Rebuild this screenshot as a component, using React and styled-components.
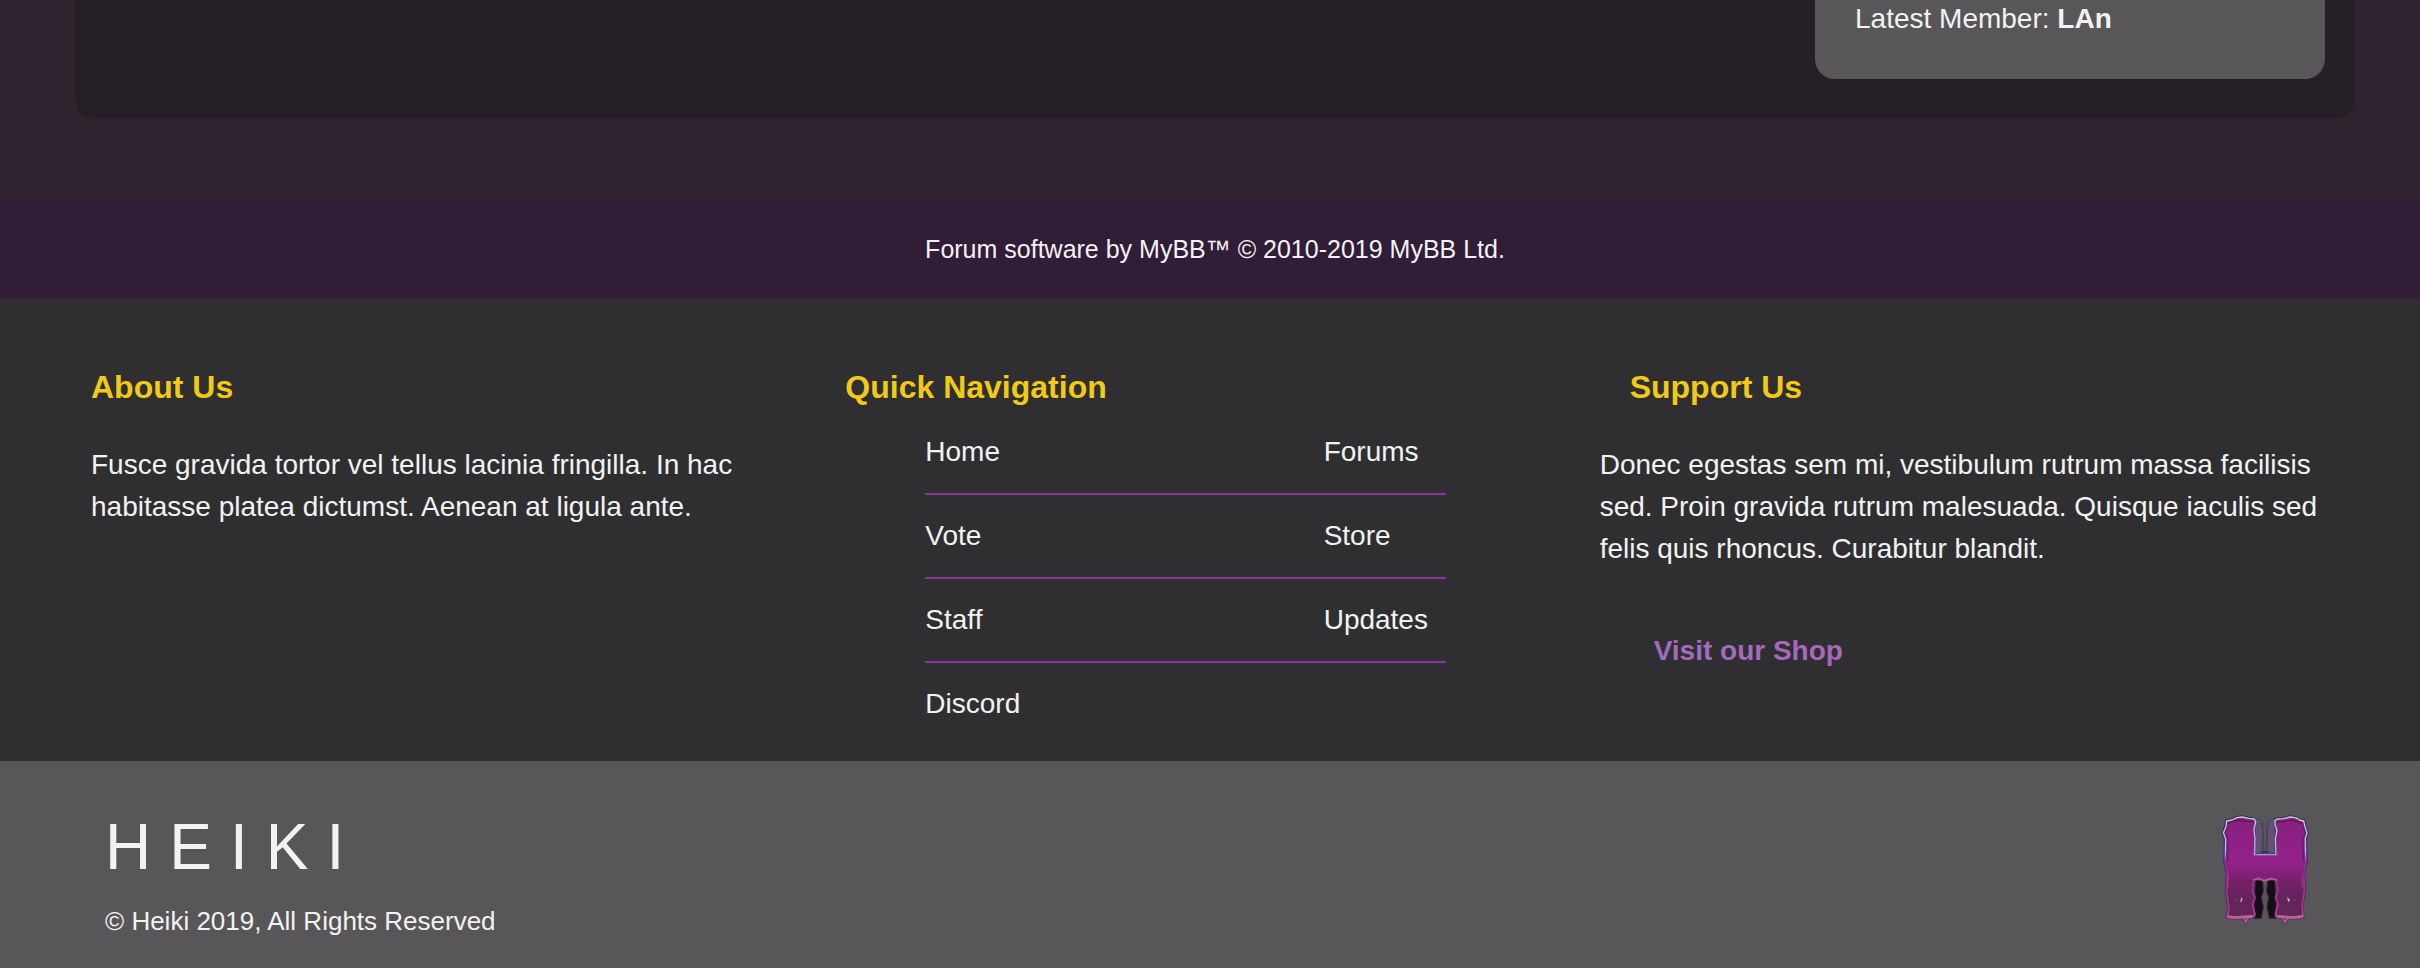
import React from 'react';
import styled, { createGlobalStyle } from 'styled-components';

const GlobalStyle = createGlobalStyle`
  *, *::before, *::after { box-sizing: border-box; }
  body {
    margin: 0;
    background: #2e232f;
    color: #f2f2f2;
    font-family: "Liberation Sans", Arial, sans-serif;
    font-size: 28px;
    line-height: 42px;
  }
`;

const Content = styled.main`
  padding: 0 65px 80px 75px;
`;

const Panel = styled.section`
  display: flex;
  justify-content: flex-end;
  padding: 0 30px 40px;
  background: #262026;
  border-radius: 0 0 20px 20px;
`;

const StatsCard = styled.aside`
  width: 510px;
  padding: 0 40px 41px;
  background: #595659;
  border-radius: 0 0 20px 20px;
`;

const Stat = styled.p`
  margin: 0;
  line-height: 38px;
`;

const SoftwareBar = styled.div`
  padding: 30px 30px 30px 40px;
  background: #321d38;
  font-size: 25px;
  line-height: 40px;
  text-align: center;
`;

const FooterColumns = styled.div`
  display: grid;
  grid-template-columns: repeat(3, minmax(0, 1fr));
  gap: 24px;
  padding: 64px 90px 35px 91px;
  background: #2f2f31;
`;

const Column = styled.section``;

const Heading = styled.h2`
  margin: 0;
  padding-left: ${({ $indent }) => ($indent ? '30px' : '0')};
  color: #f1c917;
  font-size: 32px;
  line-height: 48px;
`;

const Text = styled.p`
  margin: 33px 0 0;
`;

const NavList = styled.ul`
  display: grid;
  grid-template-columns: 1fr 122px;
  row-gap: 20px;
  margin: 20px 130px 0 80px;
  padding: 0;
  list-style: none;
`;

const NavItem = styled.li`
  padding-bottom: 20px;
  border-bottom: 2px solid #8636a3;

  &:last-child {
    padding-bottom: 1px;
    border-bottom: 0;
  }
`;

const NavLink = styled.a`
  color: inherit;
  text-decoration: none;
`;

const ShopLink = styled.a`
  display: inline-block;
  margin: 60px 0 0 54px;
  color: #a569bd;
  font-weight: bold;
  text-decoration: none;
`;

const BottomBar = styled.div`
  display: flex;
  justify-content: space-between;
  align-items: center;
  padding: 38px 110px 27px 105px;
  background: #595659;
`;

const Brand = styled.p`
  margin: 0 0 7px;
  font-size: 64px;
  line-height: 96px;
  letter-spacing: 18px;
`;

const Copyright = styled.p`
  margin: 0;
  font-size: 26px;
  line-height: 39px;
`;

const LogoSvg = styled.svg`
  display: block;
  width: 90px;
  height: 112px;
`;

function Logo() {
  return (
    <LogoSvg viewBox="60 45 270 336" role="img" aria-label="Heiki">
      <defs>
        <linearGradient id="body" x1="0" y1="0" x2="0" y2="1">
          <stop offset="0" stopColor="#86217c" />
          <stop offset="0.42" stopColor="#94208b" />
          <stop offset="0.62" stopColor="#742268" />
          <stop offset="0.8" stopColor="#63235a" />
          <stop offset="1" stopColor="#642b5b" />
        </linearGradient>
        <linearGradient id="edge" x1="0" y1="0" x2="0" y2="1">
          <stop offset="0" stopColor="#bfcddb" />
          <stop offset="0.33" stopColor="#b0b7d6" />
          <stop offset="0.42" stopColor="#8d3294" />
          <stop offset="0.85" stopColor="#b63a80" />
          <stop offset="1" stopColor="#c45c9c" />
        </linearGradient>
        <linearGradient id="rim" x1="0" y1="0" x2="0" y2="1">
          <stop offset="0" stopColor="#29334f" />
          <stop offset="0.4" stopColor="#23408f" />
          <stop offset="0.5" stopColor="#4c2f7c" />
          <stop offset="1" stopColor="#622e70" />
        </linearGradient>
      </defs>
      <path d="M166 58 L182 64 L188 96 L186 162 L166 164Z M224 58 L209 64 L202 96 L204 162 L224 164Z" fill="#694f70" stroke="#2b4d75" strokeWidth="3" />
      <path d="M188 72 L192 156 M202 72 L198 156" stroke="#413c48" strokeWidth="2" fill="none" />
      <path d="M166 242 L188 246 L190 276 L184 296 L190 324 L184 358 L162 358Z M224 242 L203 246 L200 276 L206 296 L201 324 L208 358 L230 358Z" fill="#170d18" stroke="#302433" strokeWidth="3" />
      <path d="M78 63 L95 60 L108 53 L126 51 L145 55 L162 57 L167 65 L167 78 L163 96 L166 119 L164 166 L228 166 L225 119 L230 94 L223 77 L224 62 L231 57 L250 56 L268 51 L286 53 L298 60 L314 63 L318 83 L325 101 L320 118 L322 190 L315 218 L317 275 L309 320 L312 356 L293 360 L279 360 L265 359 L256 374 L247 360 L227 356 L225 347 L232 315 L225 295 L231 275 L229 246 L213 240 L195 246 L176 239 L162 247 L160 276 L167 296 L159 315 L166 350 L158 358 L148 358 L138 374 L129 359 L98 361 L79 356 L83 326 L76 275 L78 222 L71 188 L73 121 L66 101 L73 84Z" fill="url(#body)" stroke="url(#rim)" strokeWidth="4" strokeLinejoin="round" />
      <path d="M80 66 L97 63 L110 56 L127 54 L146 58 L163 60 L167 68 L162 93 L165 119 L164 167 L228 167 L226 119 L231 94 L225 77 L225 65 L232 60 L251 59 L270 54 L287 56 L299 63 L311 66 L315 84 L321 101 L316 119 L317 190 L312 220 L313 276 L306 318 L309 352 L281 355 L264 354 L255 370 L248 355 L230 352 L227 343 L235 315 L227 294 L234 275 L231 246 L214 237 L194 242 L176 236 L160 246 L157 275 L164 296 L157 315 L165 346 L158 353 L146 353 L137 370 L132 354 L98 356 L82 352 L87 325 L80 276 L82 220 L76 190 L77 119 L70 101 L78 83Z" fill="none" stroke="url(#edge)" strokeWidth="4" strokeLinejoin="round" />
      <path d="M83 75 L94 68 L111 64 L128 66 L161 68 M228 69 L247 68 L270 64 L293 68 L310 76" fill="none" stroke="#651744" strokeWidth="4" />
      <path d="M85 81 L77 101 L84 119 L82 188 M309 81 L316 102 L308 120 L311 188" fill="none" stroke="#6e1970" strokeWidth="4" />
      <path d="M160 160 L160 170 L231 170 L232 160" fill="none" stroke="#a8439b" strokeWidth="3" />
      <path d="M160 242 L176 239 L194 246 L214 239 L231 243" fill="none" stroke="#d25b91" strokeWidth="4" />
      <path d="M184 159 H205" stroke="#122d83" strokeWidth="5" />
      <path d="M83 353 L102 356 L158 352 M232 352 L281 356 L308 352" fill="none" stroke="#bd649d" strokeWidth="8" />
      <path d="M85 226 L84 266 M307 226 L307 266" fill="none" stroke="#9f4278" strokeWidth="3" />
      <path d="M125 294 L127 304 L121 309Z M262 294 L270 304 L265 308Z" fill="#eee1e9" stroke="#b27391" strokeWidth="2" />
      <path d="M118 307 L122 310 M268 305 L271 308" stroke="#2b70be" strokeWidth="3" />
      <path d="M105 304 H109 M283 304 H287" stroke="#d14a68" strokeWidth="3" />
    </LogoSvg>
  );
}

const links = ['Home', 'Forums', 'Vote', 'Store', 'Staff', 'Updates', 'Discord'];

export default function App() {
  return (
    <>
      <GlobalStyle />
      <Content>
        <Panel>
          <StatsCard>
            <Stat>Latest Member: <strong>LAn</strong></Stat>
          </StatsCard>
        </Panel>
      </Content>
      <footer>
        <SoftwareBar>Forum software by MyBB™ © 2010-2019 MyBB Ltd.</SoftwareBar>
        <FooterColumns>
          <Column>
            <Heading>About Us</Heading>
            <Text>
              Fusce gravida tortor vel tellus lacinia fringilla. In hac habitasse platea dictumst. Aenean at ligula ante.
            </Text>
          </Column>
          <Column as="nav" aria-label="Quick Navigation">
            <Heading>Quick Navigation</Heading>
            <NavList>
              {links.map((label) => (
                <NavItem key={label}>
                  <NavLink href={`#${label.toLowerCase()}`}>{label}</NavLink>
                </NavItem>
              ))}
            </NavList>
          </Column>
          <Column>
            <Heading $indent>Support Us</Heading>
            <Text>
              Donec egestas sem mi, vestibulum rutrum massa facilisis sed. Proin gravida rutrum malesuada. Quisque iaculis sed felis quis rhoncus. Curabitur blandit.
            </Text>
            <ShopLink href="#shop">Visit our Shop</ShopLink>
          </Column>
        </FooterColumns>
        <BottomBar>
          <div>
            <Brand>HEIKI</Brand>
            <Copyright>© Heiki 2019, All Rights Reserved</Copyright>
          </div>
          <Logo />
        </BottomBar>
      </footer>
    </>
  );
}
